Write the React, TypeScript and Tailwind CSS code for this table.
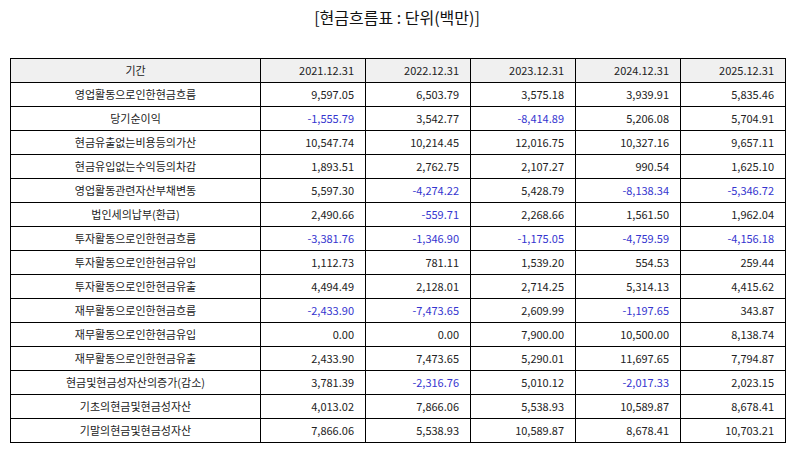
import React from "react";

type Row = { label: string; values: string[] };

const years = ["2021.12.31", "2022.12.31", "2023.12.31", "2024.12.31", "2025.12.31"];

const rows: Row[] = [
  { label: "영업활동으로인한현금흐름", values: ["9,597.05", "6,503.79", "3,575.18", "3,939.91", "5,835.46"] },
  { label: "당기순이익", values: ["-1,555.79", "3,542.77", "-8,414.89", "5,206.08", "5,704.91"] },
  { label: "현금유출없는비용등의가산", values: ["10,547.74", "10,214.45", "12,016.75", "10,327.16", "9,657.11"] },
  { label: "현금유입없는수익등의차감", values: ["1,893.51", "2,762.75", "2,107.27", "990.54", "1,625.10"] },
  { label: "영업활동관련자산부채변동", values: ["5,597.30", "-4,274.22", "5,428.79", "-8,138.34", "-5,346.72"] },
  { label: "법인세의납부(환급)", values: ["2,490.66", "-559.71", "2,268.66", "1,561.50", "1,962.04"] },
  { label: "투자활동으로인한현금흐름", values: ["-3,381.76", "-1,346.90", "-1,175.05", "-4,759.59", "-4,156.18"] },
  { label: "투자활동으로인한현금유입", values: ["1,112.73", "781.11", "1,539.20", "554.53", "259.44"] },
  { label: "투자활동으로인한현금유출", values: ["4,494.49", "2,128.01", "2,714.25", "5,314.13", "4,415.62"] },
  { label: "재무활동으로인한현금흐름", values: ["-2,433.90", "-7,473.65", "2,609.99", "-1,197.65", "343.87"] },
  { label: "재무활동으로인한현금유입", values: ["0.00", "0.00", "7,900.00", "10,500.00", "8,138.74"] },
  { label: "재무활동으로인한현금유출", values: ["2,433.90", "7,473.65", "5,290.01", "11,697.65", "7,794.87"] },
  { label: "현금및현금성자산의증가(감소)", values: ["3,781.39", "-2,316.76", "5,010.12", "-2,017.33", "2,023.15"] },
  { label: "기초의현금및현금성자산", values: ["4,013.02", "7,866.06", "5,538.93", "10,589.87", "8,678.41"] },
  { label: "기말의현금및현금성자산", values: ["7,866.06", "5,538.93", "10,589.87", "8,678.41", "10,703.21"] },
];

const font = { fontFamily: '"Noto Sans CJK KR", "Noto Sans", sans-serif' };

export default function App() {
  return (
    <div className="w-[794px] h-[452px] bg-white text-[#222]" style={font}>
      <h1 className="pt-[5px] h-[58px] text-center text-[16px] leading-[24px] text-[#111]">
        [현금흐름표 : 단위(백만)]
      </h1>
      <table className="ml-[10px] w-[775px] border-collapse table-fixed text-[11px]">
        <colgroup>
          <col className="w-[250px]" />
          {years.map((y) => (
            <col key={y} className="w-[105px]" />
          ))}
        </colgroup>
        <thead>
          <tr className="h-[24px] bg-[#f0f0f0]">
            <th className="border-[1.5px] border-black font-normal text-center">기간</th>
            {years.map((y) => (
              <th key={y} className="border-[1.5px] border-black font-normal text-right pr-[11px]">
                {y}
              </th>
            ))}
          </tr>
        </thead>
        <tbody>
          {rows.map((r) => (
            <tr key={r.label} className="h-[24px]">
              <td className="border-[1.5px] border-black text-center">{r.label}</td>
              {r.values.map((v, i) => (
                <td
                  key={i}
                  className={`border-[1.5px] border-black text-right pr-[11px] ${v.startsWith("-") ? "text-[#3535cf]" : ""}`}
                >
                  {v}
                </td>
              ))}
            </tr>
          ))}
        </tbody>
      </table>
    </div>
  );
}
